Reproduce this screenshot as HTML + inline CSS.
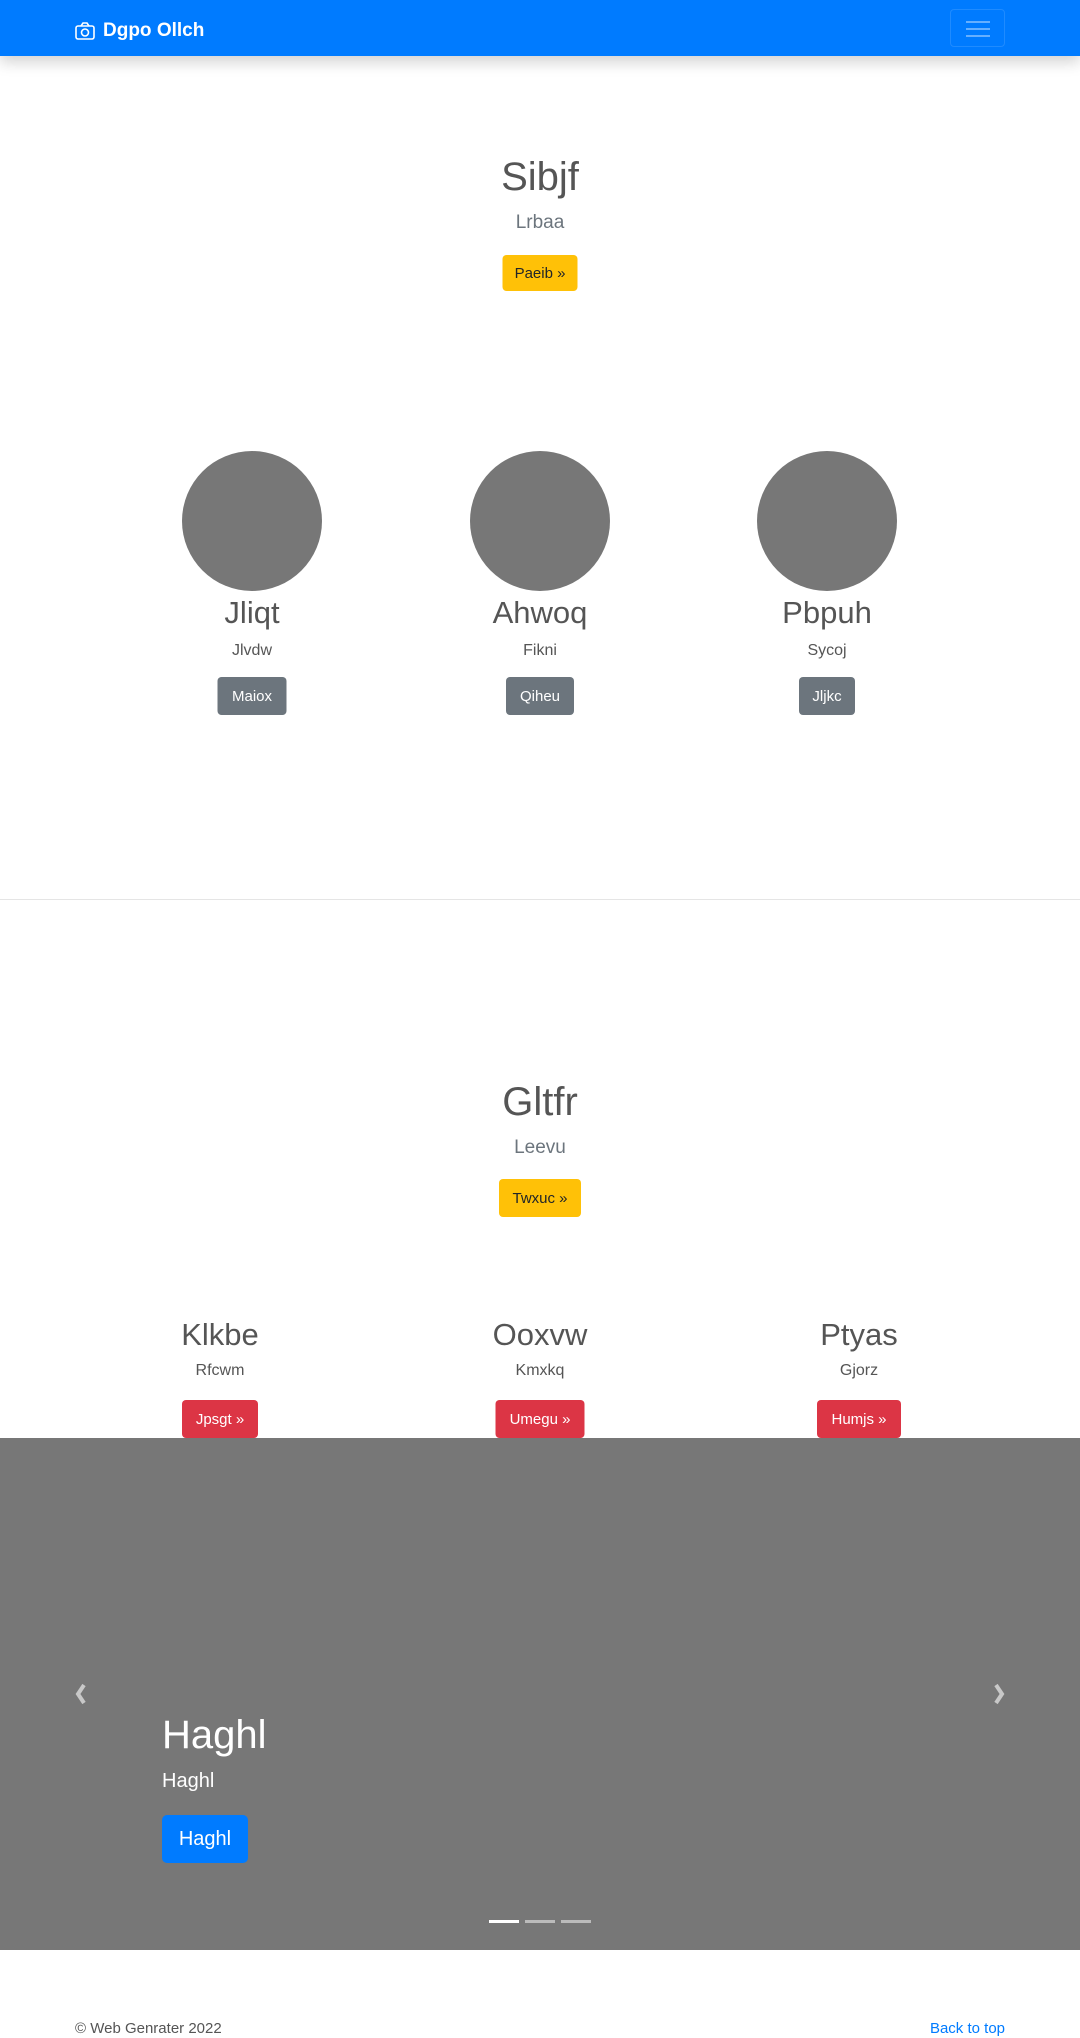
<!DOCTYPE html>
<html><head><meta charset="utf-8"><style>
*{box-sizing:border-box;margin:0;padding:0}
body{width:1080px;height:2038px;position:relative;font-family:"Liberation Sans",sans-serif;color:#555;background:#fff;overflow:hidden}
.nav{position:absolute;left:0;top:0;width:1080px;height:56px;background:#007bff;box-shadow:0 6px 14px rgba(0,0,0,.18)}
.brand{position:absolute;left:75px;top:20px;color:#fff;font-weight:bold;font-size:19px;display:flex;align-items:center;gap:8px}
.tog{position:absolute;left:950px;top:9px;width:55px;height:38px;border:1px solid rgba(255,255,255,.12);border-radius:4px}
.tog i{position:absolute;left:15px;width:24px;height:2px;background:rgba(255,255,255,.4)}
.c{position:absolute;transform:translateX(-50%);text-align:center;white-space:nowrap}
.btn{position:absolute;transform:translateX(-50%);border-radius:4px;font-size:15px;display:flex;align-items:center;justify-content:center}
.circ{position:absolute;width:140px;height:140px;border-radius:50%;background:#777;top:451px}
.car{position:absolute;left:0;top:1438px;width:1080px;height:512px;background:#777}
.ind{position:absolute;top:1920px;width:30px;height:3px;background:rgba(255,255,255,.5)}
</style></head><body>
<div class="nav">
 <div class="brand"><svg width="20" height="18" viewBox="0 0 20 18" fill="none" stroke="#fff" stroke-width="1.6"><rect x="1" y="4" width="18" height="13" rx="2"/><path d="M6 4l2-3h4l2 3"/><circle cx="10" cy="10.5" r="3.5"/></svg>Dgpo Ollch</div>
 <div class="tog"><i style="top:11px"></i><i style="top:18px"></i><i style="top:25px"></i></div>
</div>

<div class="c" style="left:540px;top:155px;font-size:40px;font-weight:500">Sibjf</div>
<div class="c" style="left:540px;top:212px;font-size:19px;font-weight:300;color:#6c757d">Lrbaa</div>
<div class="btn" style="left:540px;top:255px;width:75px;height:36px;background:#ffc107;color:#212529">Paeib »</div>

<div class="circ" style="left:182px"></div>
<div class="circ" style="left:470px"></div>
<div class="circ" style="left:757px"></div>
<div class="c" style="left:252px;top:595px;font-size:31px;font-weight:300">Jliqt</div>
<div class="c" style="left:540px;top:595px;font-size:31px;font-weight:300">Ahwoq</div>
<div class="c" style="left:827px;top:595px;font-size:31px;font-weight:300">Pbpuh</div>
<div class="c" style="left:252px;top:642px;font-size:16px">Jlvdw</div>
<div class="c" style="left:540px;top:642px;font-size:16px">Fikni</div>
<div class="c" style="left:827px;top:642px;font-size:16px">Sycoj</div>
<div class="btn" style="left:252px;top:677px;width:69px;height:38px;background:#6c757d;color:#fff">Maiox</div>
<div class="btn" style="left:540px;top:677px;width:68px;height:38px;background:#6c757d;color:#fff">Qiheu</div>
<div class="btn" style="left:827px;top:677px;width:56px;height:38px;background:#6c757d;color:#fff">Jljkc</div>

<div style="position:absolute;left:0;top:899px;width:1080px;height:1px;background:#e5e5e5"></div>

<div class="c" style="left:540px;top:1080px;font-size:40px;font-weight:500">Gltfr</div>
<div class="c" style="left:540px;top:1137px;font-size:19px;font-weight:300;color:#6c757d">Leevu</div>
<div class="btn" style="left:540px;top:1179px;width:82px;height:38px;background:#ffc107;color:#212529">Twxuc »</div>

<div class="c" style="left:220px;top:1317px;font-size:31px;font-weight:500">Klkbe</div>
<div class="c" style="left:540px;top:1317px;font-size:31px;font-weight:500">Ooxvw</div>
<div class="c" style="left:859px;top:1317px;font-size:31px;font-weight:500">Ptyas</div>
<div class="c" style="left:220px;top:1362px;font-size:16px">Rfcwm</div>
<div class="c" style="left:540px;top:1362px;font-size:16px">Kmxkq</div>
<div class="c" style="left:859px;top:1362px;font-size:16px">Gjorz</div>
<div class="btn" style="left:220px;top:1400px;width:76px;height:38px;background:#dc3545;color:#fff">Jpsgt »</div>
<div class="btn" style="left:540px;top:1400px;width:89px;height:38px;background:#dc3545;color:#fff">Umegu »</div>
<div class="btn" style="left:859px;top:1400px;width:84px;height:38px;background:#dc3545;color:#fff">Humjs »</div>

<div class="car"></div>
<svg style="position:absolute;left:73px;top:1683px" width="16" height="22" viewBox="0 0 16 22"><path d="M11 2L5 11l6 9" stroke="#c8c8c8" stroke-width="4" fill="none"/></svg>
<svg style="position:absolute;left:991px;top:1683px" width="16" height="22" viewBox="0 0 16 22"><path d="M5 2l6 9-6 9" stroke="#c8c8c8" stroke-width="4" fill="none"/></svg>
<div style="position:absolute;left:162px;top:1713px;font-size:40px;font-weight:500;color:#fff">Haghl</div>
<div style="position:absolute;left:162px;top:1770px;font-size:20px;color:#fff">Haghl</div>
<div style="position:absolute;left:162px;top:1815px;width:86px;height:48px;background:#007bff;border-radius:5px;color:#fff;font-size:20px;display:flex;align-items:center;justify-content:center">Haghl</div>
<div class="ind" style="left:489px;background:#fff"></div>
<div class="ind" style="left:525px"></div>
<div class="ind" style="left:561px"></div>

<div style="position:absolute;left:75px;top:2020px;font-size:15px;color:#555">© Web Genrater 2022</div>
<div style="position:absolute;right:75px;top:2020px;font-size:15px;color:#007bff">Back to top</div>
</body></html>
